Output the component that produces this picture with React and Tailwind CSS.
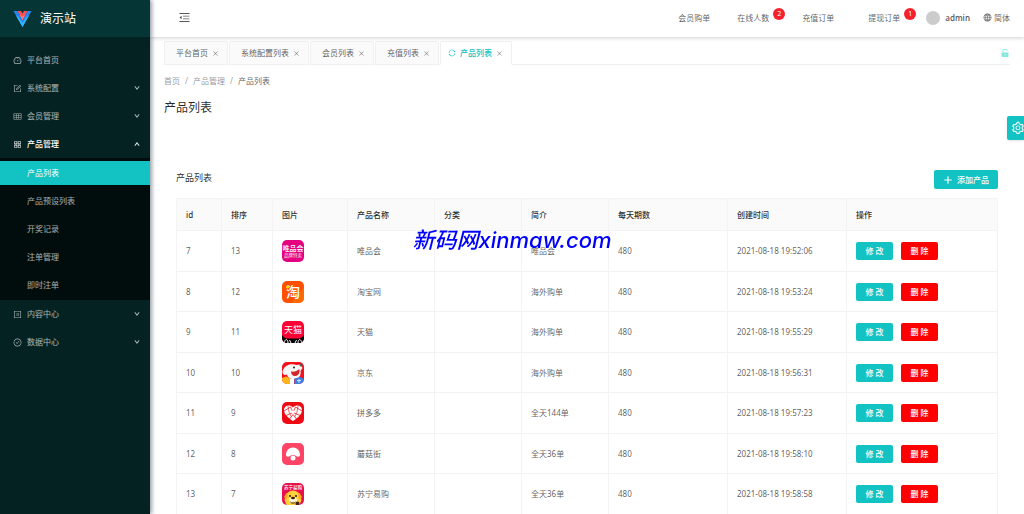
import { useState } from 'react';
import {
  AiOutlineDashboard, AiOutlineForm, AiOutlineTable, AiOutlineAppstore, AiOutlineProfile,
  AiOutlineCheckCircle, AiOutlineMenuFold, AiOutlineGlobal, AiOutlineSetting, AiFillUnlock,
  AiOutlineSync, AiOutlineDown, AiOutlineUp, AiOutlinePlus, AiOutlineClose,
} from 'react-icons/ai';

const menus = [
  { name: '平台首页', icon: AiOutlineDashboard },
  { name: '系统配置', icon: AiOutlineForm, children: [] },
  { name: '会员管理', icon: AiOutlineTable, children: [] },
  { name: '产品管理', icon: AiOutlineAppstore, children: ['产品列表', '产品预设列表', '开奖记录', '注单管理', '即时注单'] },
  { name: '内容中心', icon: AiOutlineProfile, children: [] },
  { name: '数据中心', icon: AiOutlineCheckCircle, children: [] },
];

const tabs = ['平台首页', '系统配置列表', '会员列表', '充值列表', '产品列表'];

const columns = [
  { title: 'id', width: 'w-[45px]' },
  { title: '排序', width: 'w-[51px]' },
  { title: '图片', width: 'w-[75px]' },
  { title: '产品名称', width: 'w-[87px]' },
  { title: '分类', width: 'w-[87px]' },
  { title: '简介', width: 'w-[87px]' },
  { title: '每天期数', width: 'w-[119px]' },
  { title: '创建时间', width: 'w-[119px]' },
  { title: '操作', width: '' },
];

const VipLogo = () => (
  <>
    <rect width="44" height="44" fill="#e4007f" />
    <text x="22" y="22" fontSize="14" fontWeight="500" fill="#fff" textAnchor="middle">唯品会</text>
    <text x="22" y="34" fontSize="9" fill="#fff" textAnchor="middle">品牌特卖</text>
  </>
);

const TaobaoLogo = () => (
  <>
    <rect width="44" height="44" fill="#ff5000" />
    <path d="M44 12v32H18Z" fill="#ff7a00" opacity=".6" />
    <text x="22" y="32" fontSize="28" fontWeight="500" fill="#fff" textAnchor="middle">淘</text>
    <circle cx="11" cy="12" r="3" fill="#ffe100" />
  </>
);

const TmallLogo = () => (
  <>
    <rect width="44" height="44" fill="#ff0036" />
    <path d="M0 28c4 6 8 7 12 7h20c4 0 8-1 12-7v16H0Z" fill="#000" />
    <path d="M5 44c0-9 7-9 7 0M32 44c0-9 7-9 7 0" fill="#000" stroke="#fff" strokeWidth="2" />
    <path d="M15 38l3 6M29 38l-3 6" stroke="#fff" strokeWidth="2" />
    <text x="22" y="23" fontSize="18" fontWeight="400" fill="#fff" textAnchor="middle">天猫</text>
  </>
);

const JdLogo = () => (
  <>
    <rect width="44" height="44" fill="#f5101a" />
    <path d="M3 14C7 5 20 2 29 6l8-1 4 7-4 6c2 10-4 17-14 16-8 0-12-4-13-9-7 3-12-3-7-11Z" fill="#f6f6f6" />
    <path d="M18 19c7 1 12-1 17-5 1 9-3 14-9 14-5 0-8-4-8-9Z" fill="#d3252b" />
    <circle cx="24" cy="11" r="2" fill="#222" />
    <circle cx="38" cy="6" r="3" fill="#555" />
    <path d="M0 32l8-3 8 3v12H0Z" fill="#ffb51b" />
    <path d="M16 34l8-2v12h-8Z" fill="#fff" />
    <path d="M25 33l12-3 7 4v10H25Z" fill="#3b82e6" />
    <path d="M30 37h8M34 34v8" stroke="#cfe4ff" strokeWidth="2" />
  </>
);

const PddLogo = () => (
  <>
    <rect width="44" height="44" fill="#ee0a14" />
    <path d="M22 38C11 31 4 24 4 16 4 7 15 4 22 11c7-7 18-4 18 5 0 8-7 15-18 22Z" fill="#fff" />
    <path d="M4 18l13-8 5 11 5-11 13 8M8 27l14-6 14 6M15 34l7-9 7 9" fill="none" stroke="#ee0a14" strokeWidth="1.5" />
    <path d="M12 8l2 12 4 9M32 8l-2 12-4 9" fill="none" stroke="#ee0a14" strokeWidth="1.2" />
    <circle cx="22" cy="20" r="3" fill="#fff" />
  </>
);

const MoguLogo = () => (
  <>
    <rect width="44" height="44" fill="#ff4466" />
    <path d="M8 24C8 15 14 9 22 9s14 6 14 15c0 4-5 4-8 2-2-3-10-3-12 0-3 2-8 2-8-2Z" fill="#fff" />
    <circle cx="22" cy="30" r="5" fill="#fff" />
  </>
);

const SuningLogo = () => (
  <>
    <rect width="44" height="44" fill="#e8104c" />
    <text x="22" y="12" fontSize="9" fontWeight="500" fill="#fff" textAnchor="middle">苏宁易购</text>
    <path d="M8 24c2-5 7-8 14-9 7 1 12 4 14 9l3 10-4 10H9L5 34Z" fill="#ffd03a" />
    <path d="M9 20l-5 8 5 6 3-10ZM35 20l5 8-5 6-3-10Z" fill="#f7a823" />
    <ellipse cx="22" cy="34" rx="8" ry="6" fill="#fff3d0" />
    <circle cx="16" cy="26" r="2" fill="#3a1c0a" />
    <circle cx="28" cy="26" r="2" fill="#3a1c0a" />
    <ellipse cx="22" cy="30" rx="4" ry="2.5" fill="#3a1c0a" />
    <path d="M17 38c2 3 8 3 10 0" fill="none" stroke="#3f2413" strokeWidth="2" />
    <circle cx="31" cy="41" r="4" fill="#3f2413" />
  </>
);

const products = [
  { id: 7, sort: 13, logo: VipLogo, name: '唯品会', intro: '唯品会', time: '2021-08-18 19:52:06' },
  { id: 8, sort: 12, logo: TaobaoLogo, name: '淘宝网', intro: '海外购单', time: '2021-08-18 19:53:24' },
  { id: 9, sort: 11, logo: TmallLogo, name: '天猫', intro: '海外购单', time: '2021-08-18 19:55:29' },
  { id: 10, sort: 10, logo: JdLogo, name: '京东', intro: '海外购单', time: '2021-08-18 19:56:31' },
  { id: 11, sort: 9, logo: PddLogo, name: '拼多多', intro: '全天144单', time: '2021-08-18 19:57:23' },
  { id: 12, sort: 8, logo: MoguLogo, name: '蘑菇街', intro: '全天36单', time: '2021-08-18 19:58:10' },
  { id: 13, sort: 7, logo: SuningLogo, name: '苏宁易购', intro: '全天36单', time: '2021-08-18 19:58:58' },
];

const Sidebar = () => {
  const [open, setOpen] = useState('产品管理');
  const [active, setActive] = useState('产品列表');

  return (
    <aside className="relative z-20 w-[150px] shrink-0 bg-[#042222] shadow-[2px_0_4px_rgba(0,21,41,0.4)]">
      <div className="flex h-[37px] items-center gap-2 bg-[#063535] pl-[13px]">
        <svg viewBox="0 0 36 32" className="h-4 w-[19px]">
          <path d="M0 0h8l10 18L28 0h8L18 32Z" fill="#2486f5" />
          <path d="M5 9l13 23L31 9l-5 3-8 12-8-12Z" fill="#35b5fb" />
          <path d="M8 0h7l3 5 3-5h7L18 18Z" fill="#ff4d55" />
          <path d="M12 7l6 4 6-4-6 11Z" fill="#ff7a7a" />
        </svg>
        <h1 className="pt-px text-[12px] text-white">演示站</h1>
      </div>
      <nav className="pt-[9px] text-white/65">
        {menus.map(({ name, icon: Icon, children }) => (
          <div key={name}>
            <button
              type="button"
              onClick={() => children && setOpen(open === name ? '' : name)}
              className={`flex h-7 w-full items-center gap-[5px] pr-[10px] pl-[13px] ${open === name ? 'font-medium text-white' : ''}`}
            >
              <Icon size={9} />
              <span className="flex-1 text-left">{name}</span>
              {children && (open === name
                ? <AiOutlineUp size={6} strokeWidth={80} stroke="currentColor" />
                : <AiOutlineDown size={6} strokeWidth={80} stroke="currentColor" />)}
            </button>
            {open === name && children.length > 0 && (
              <div className="flex flex-col gap-1 bg-[#000d0c] py-[3px]">
                {children.map(child => (
                  <a
                    key={child}
                    href="#"
                    onClick={() => setActive(child)}
                    className={`flex h-6 items-center pl-[27px] ${active === child ? 'bg-[#13c2c2] text-white' : ''}`}
                  >
                    {child}
                  </a>
                ))}
              </div>
            )}
          </div>
        ))}
      </nav>
    </aside>
  );
};

const HeaderLink = ({ label, count }) => (
  <a href="#" className="relative">
    {label}
    {count && (
      <span className="absolute -top-[4px] -right-4 flex h-3 w-3 items-center justify-center rounded-full bg-[#f5222d] text-[7px] text-white">{count}</span>
    )}
  </a>
);

const Header = () => (
  <header className="relative z-10 flex h-[37px] shrink-0 items-center bg-white pr-[14px] pb-[2px] pl-7 shadow-[0_1px_4px_rgba(0,21,41,0.2)]">
    <button type="button" aria-label="收起菜单"><AiOutlineMenuFold size={13} /></button>
    <div className="ml-auto flex items-center">
      <div className="flex items-center gap-[27px]">
        <HeaderLink label="会员购单" />
        <div className="flex gap-[33px]">
          <HeaderLink label="在线人数" count={2} />
          <div className="flex gap-[34px]">
            <HeaderLink label="充值订单" />
            <HeaderLink label="提现订单" count={1} />
          </div>
        </div>
      </div>
      <a href="#" className="ml-[26px] flex items-center gap-[5px] font-semibold">
        <span className="h-[14px] w-[14px] rounded-full bg-[#ccc]" />
        admin
      </a>
      <a href="#" className="ml-[13px] flex items-center gap-[2px]"><AiOutlineGlobal size={9} />简体</a>
    </div>
  </header>
);

const TabBar = () => (
  <div className="flex h-6 items-stretch gap-px border-b border-[#f0f0f0]">
    {tabs.map(tab => {
      const current = tab === '产品列表';
      return (
        <div
          key={tab}
          className={`-mb-px flex items-center gap-1 rounded-t-xs border border-[#f0f0f0] ${current ? 'border-b-white bg-white pr-2 pl-[7px]' : 'bg-[#fafafa] pr-2 pl-[11px]'}`}
        >
          {current && <AiOutlineSync size={8} className="text-[#13c2c2]" />}
          <a href="#" className={current ? 'font-medium text-[#13c2c2]' : ''}>{tab}</a>
          <button type="button" aria-label={`关闭${tab}`} className="text-black/45"><AiOutlineClose size={7} /></button>
        </div>
      );
    })}
    <button type="button" aria-label="锁定" className="ml-auto text-[#84e6dd]"><AiFillUnlock size={10} /></button>
  </div>
);

const ProductTable = () => (
  <table className="w-full table-fixed border-separate border-spacing-0 rounded-t-xs border-t border-l border-[#f3f3f3] text-left">
    <thead className="bg-[#fafafa] text-black/85">
      <tr className="h-8">
        {columns.map(c => (
          <th key={c.title} className={`border-r border-b border-[#f3f3f3] px-[9px] font-medium ${c.width}`}>{c.title}</th>
        ))}
      </tr>
    </thead>
    <tbody>
      {products.map(p => (
        <tr key={p.id} className="odd:h-[41px] even:h-10 *:border-r *:border-b *:border-[#f3f3f3] *:px-[9px]">
          <td>{p.id}</td>
          <td>{p.sort}</td>
          <td>
            <svg viewBox="0 0 44 44" className="h-[22px] w-[22px] rounded-[5px]" role="img" aria-label={p.name}><p.logo /></svg>
          </td>
          <td>{p.name}</td>
          <td></td>
          <td>{p.intro}</td>
          <td>480</td>
          <td>{p.time}</td>
          <td>
            <div className="flex gap-2">
              <button type="button" className="h-[18px] w-[37px] rounded-xs bg-[#13c2c2] font-medium text-white">修 改</button>
              <button type="button" className="h-[18px] w-[37px] rounded-xs bg-[#ff0000] font-medium text-white">删 除</button>
            </div>
          </td>
        </tr>
      ))}
    </tbody>
  </table>
);

const App = () => (
  <div className="flex h-screen overflow-hidden bg-white font-['Noto_Sans','Noto_Sans_CJK_SC',sans-serif] text-[8px] leading-3 text-black/65">
    <Sidebar />
    <div className="flex min-w-0 flex-1 flex-col">
      <Header />
      <main className="min-h-0 flex-1 overflow-hidden px-[14px] pt-1">
        <TabBar />
        <nav className="mt-[10px] flex gap-[5px] text-black/45">
          <a href="#">首页</a>
          <span>/</span>
          <a href="#">产品管理</a>
          <span>/</span>
          <span className="text-black/65">产品列表</span>
        </nav>
        <h2 className="mt-[13px] text-[12px] leading-4 text-black/85">产品列表</h2>
        <section className="mt-[52px] px-3">
          <div className="mb-[9px] flex h-[21px] items-end justify-between">
            <h3 className="self-start text-[9px] leading-5 text-black/85">产品列表</h3>
            <button type="button" className="flex h-[19px] items-center gap-1 rounded-xs bg-[#13c2c2] px-[9px] font-medium text-white">
              <AiOutlinePlus size={10} strokeWidth={40} stroke="currentColor" />添加产品
            </button>
          </div>
          <ProductTable />
        </section>
      </main>
    </div>
    <button type="button" aria-label="设置" className="fixed top-[116px] right-0 z-20 flex h-6 w-[17px] items-center rounded-l-xs bg-[#13c2c2] pl-1 text-white shadow">
      <AiOutlineSetting size={14} className="shrink-0" />
    </button>
    <div className="pointer-events-none fixed inset-x-0 top-[226px] z-30 text-center font-['Inter','Noto_Sans_CJK_SC',sans-serif] text-[22px] leading-7 font-medium text-[#0000ff] italic">新码网xinmaw.com</div>
  </div>
);

export default App;
